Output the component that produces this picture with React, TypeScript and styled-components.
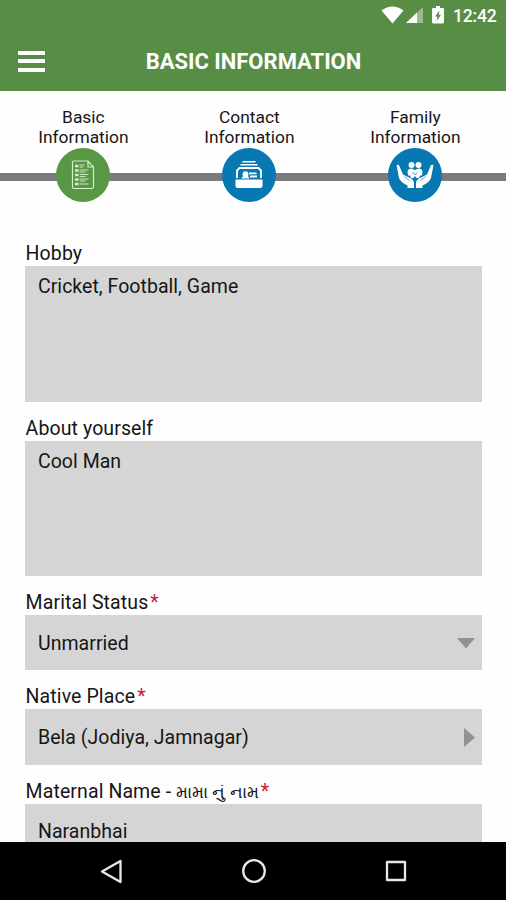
import React from "react";
import styled, { createGlobalStyle } from "styled-components";

const GlobalStyle = createGlobalStyle`
  * { box-sizing: border-box; }
  body { margin: 0; background: #fff; font-family: Roboto, "Noto Sans", sans-serif; }
`;

const Screen = styled.div`
  width: 506px;
  height: 900px;
  display: flex;
  flex-direction: column;
  overflow: hidden;
  background: #fefefe;
  color: #161616;
`;

const StatusBar = styled.div`
  height: 31px;
  flex: none;
  display: flex;
  justify-content: flex-end;
  padding-right: 9px;
  background: #588d45;
  color: #fff;
`;

const Clock = styled.span`
  font-size: 17.6px;
  line-height: 32px;
  font-weight: 500;
  letter-spacing: -0.2px;
  width: 44px;
  white-space: nowrap;
`;

const AppBar = styled.header`
  height: 60px;
  flex: none;
  display: grid;
  grid-template-columns: 62px 1fr 61px;
  align-items: center;
  background: #588d45;
  color: #fff;
`;

const MenuButton = styled.button`
  width: 27px;
  height: 21px;
  margin: 0 0 0 18px;
  padding: 0;
  border: 0;
  background: none;
  display: flex;
  flex-direction: column;
  justify-content: space-between;
`;

const MenuBar = styled.span`
  height: 4px;
  background: #fff;
`;

const Title = styled.h1`
  margin: 0;
  padding-top: 2px;
  font-size: 22px;
  line-height: 58px;
  font-weight: 700;
  text-align: center;
  white-space: nowrap;
`;

const Stepper = styled.nav`
  height: 151px;
  flex: none;
  display: grid;
  grid-template-columns: repeat(3, 166px);
  align-content: start;
  padding: 16px 0 0 0.4px;
  background: linear-gradient(#7b7b7b, #7b7b7b) 0 82px / 100% 8px no-repeat;
`;

const Step = styled.div`
  display: flex;
  flex-direction: column;
  align-items: center;
`;

const StepLabel = styled.span`
  height: 41px;
  font-size: 17.4px;
  line-height: 20px;
  text-align: center;
  white-space: pre-line;
`;

const StepBadge = styled.span<{ $active?: boolean }>`
  width: 54px;
  height: 54px;
  border-radius: 50%;
  display: flex;
  align-items: center;
  justify-content: center;
  background: ${(p) => (p.$active ? "#579746" : "#0878b3")};
`;

const Form = styled.main`
  flex: 1;
  min-height: 0;
  overflow: hidden;
  display: flex;
  flex-direction: column;
  gap: 15px;
  padding: 0 24px 0 25px;
`;

const Field = styled.div`
  flex: none;
`;

const Label = styled.div`
  height: 24px;
  padding-left: 0.6px;
  font-size: 19.5px;
  line-height: 24.4px;
  white-space: nowrap;
  letter-spacing: 0.1px;
`;

const Gujarati = styled.span`
  font-size: 17.2px;
  line-height: 1;
  letter-spacing: 0;
`;

const Required = styled.span`
  color: #c8203c;
  margin-left: 2px;
`;

const Box = styled.div<{ $tall?: boolean }>`
  height: ${(p) => (p.$tall ? "135.5px" : "55.3px")};
  display: flex;
  justify-content: space-between;
  align-items: ${(p) => (p.$tall ? "flex-start" : "center")};
  padding: ${(p) => (p.$tall ? "8.4px" : "1px")} 7px 0 13px;
  background: #d5d5d5;
`;

const Value = styled.span`
  font-size: 19.5px;
  line-height: 25px;
  white-space: nowrap;
  letter-spacing: 0.03px;
`;

const NavBar = styled.footer`
  height: 58px;
  flex: none;
  display: flex;
  justify-content: space-between;
  padding: 14px 95px 0 96px;
  background: #000;
`;

const StatusIcons = () => (
  <svg width="72" height="31" viewBox="0 0 72 31" fill="#fff">
    <path d="M.5 10.500Q11.500 2.500 22.500 10.500L11.500 23.500Z" />
    <path d="M42 7V23H25Z" opacity=".4" />
    <path d="M36 12.600V23H25Z" />
    <path d="M55 6h4v2h3q1 0 1 1v13q0 1.500-1.500 1.500h-9q-1.500 0-1.500-1.500V9q0-1 1-1h3z" />
    <path d="M58.500 10.500L54 16.500h2.300L55.800 21 60 14.800h-2.300z" fill="#588d45" />
  </svg>
);

const DocumentIcon = () => (
  <svg width="24" height="30" viewBox="0 0 24 30" fill="none" stroke="#d9edcf" strokeWidth="1.2">
    <path d="M3 1H17L22.500 7V27Q22.500 28.500 21 28.500H3Q1.500 28.500 1.500 27V2.500Q1.500 1 3 1ZM17 1V7H22.500" />
    <path d="M4 6h3.500M4 10.500h3.500M4 15h3.500M4 19.500h3.500M4 24h3.500" strokeWidth="2.400" />
    <path d="M8.500 5h5M8.500 7h4M8.500 10h9M8.500 12h6M8.500 14.500h9M8.500 16.500h6M8.500 19h9M8.500 21h6M8.500 24h9" strokeWidth=".9" />
  </svg>
);

const CardsIcon = () => (
  <svg width="28" height="30" viewBox="0 0 28 30" fill="none" stroke="#fff" strokeWidth="1.600">
    <path d="M7.500 1.800H20.500M5.500 4.800H22.500" />
    <path d="M2 18V10.500L4.500 8H23.500L26 10.500V18" strokeWidth="1.900" />
    <path d="M.5 19.500H27.500V26Q27.500 28 25.500 28H2.500Q.5 28 .5 26Z" fill="#fff" stroke="none" />
    <circle cx="10.500" cy="14.200" r="2.900" fill="#fff" stroke="none" />
    <path d="M6.500 18.600q1-3 4-3t4 3z" fill="#fff" stroke="none" />
    <path d="M14 13.300H21.500M15 16.500h7" strokeWidth="1.800" />
  </svg>
);

const FamilyIcon = () => (
  <svg width="38" height="30" viewBox="0 0 38 30" fill="#fff">
    <circle cx="15.500" cy="5" r="3" />
    <circle cx="22.500" cy="5" r="3" />
    <path d="M11.500 11.500Q12 8.500 15.500 8.500L19 10 22.500 8.500Q26 8.500 26.500 11.500L26 15.500H24L23 18H20.500L19 16 17.500 18H15L14 15.500H12Z" />
    <path d="M16.500 12.500L19 14.500 21.500 12.500" stroke="#0878b3" strokeWidth=".8" fill="none" />
    <path d="M.8 6.500Q.2 5 1.500 4.800 2.800 4.500 3.400 6L7 14.500 13 17.500Q18 19 18 23V28H11.500V25.500Q5 23 3 18Z" />
    <path d="M37.200 6.500Q37.800 5 36.500 4.800 35.200 4.500 34.600 6L31 14.500 25 17.500Q20 19 20 23V28H26.500V25.500Q33 23 35 18Z" />
    <path d="M8.500 16.500L13.500 20.500M29.500 16.500L24.500 20.500" stroke="#0878b3" strokeWidth=".7" />
  </svg>
);

const DownArrow = () => (
  <svg width="18" height="11" viewBox="0 0 18 11" fill="#919191"><path d="M0 0H18L9 10.500Z" /></svg>
);

const RightArrow = () => (
  <svg width="11" height="19" viewBox="0 0 11 19" fill="#919191"><path d="M0 0V19L11 9.500Z" /></svg>
);

const NavIcon = ({ children }: { children: React.ReactNode }) => (
  <svg width="30" height="30" viewBox="0 0 30 30" fill="none" stroke="#e8e8e8" strokeWidth="2.300" strokeLinejoin="round">
    {children}
  </svg>
);

const steps = [
  { label: "Basic\nInformation", icon: <DocumentIcon />, active: true },
  { label: "Contact\nInformation", icon: <CardsIcon /> },
  { label: "Family\nInformation", icon: <FamilyIcon /> },
];

interface FieldData {
  label: string;
  gujarati?: string;
  value: string;
  tall?: boolean;
  required?: boolean;
  arrow?: React.ReactNode;
}

const fields: FieldData[] = [
  { label: "Hobby", value: "Cricket, Football, Game", tall: true },
  { label: "About yourself", value: "Cool Man", tall: true },
  { label: "Marital Status", value: "Unmarried", required: true, arrow: <DownArrow /> },
  { label: "Native Place", value: "Bela (Jodiya, Jamnagar)", required: true, arrow: <RightArrow /> },
  { label: "Maternal Name - ", gujarati: "મામા નું નામ", value: "Naranbhai", required: true },
];

export default function App() {
  return (
    <>
      <GlobalStyle />
      <Screen>
        <StatusBar>
          <StatusIcons />
          <Clock>12:42</Clock>
        </StatusBar>
        <AppBar>
          <MenuButton aria-label="Menu">
            <MenuBar />
            <MenuBar />
            <MenuBar />
          </MenuButton>
          <Title>BASIC INFORMATION</Title>
        </AppBar>
        <Stepper>
          {steps.map((s) => (
            <Step key={s.label}>
              <StepLabel>{s.label}</StepLabel>
              <StepBadge $active={s.active}>{s.icon}</StepBadge>
            </Step>
          ))}
        </Stepper>
        <Form>
          {fields.map((f) => (
            <Field key={f.label}>
              <Label>
                {f.label}
                {f.gujarati && <Gujarati lang="gu">{f.gujarati}</Gujarati>}
                {f.required && <Required>*</Required>}
              </Label>
              <Box $tall={f.tall}>
                <Value>{f.value}</Value>
                {f.arrow}
              </Box>
            </Field>
          ))}
        </Form>
        <NavBar>
          <NavIcon><path d="M24.500 5V26L6 15.500Z" /></NavIcon>
          <NavIcon><circle cx="15" cy="15" r="10.800" /></NavIcon>
          <NavIcon><rect x="6" y="6" width="18" height="18" /></NavIcon>
        </NavBar>
      </Screen>
    </>
  );
}
